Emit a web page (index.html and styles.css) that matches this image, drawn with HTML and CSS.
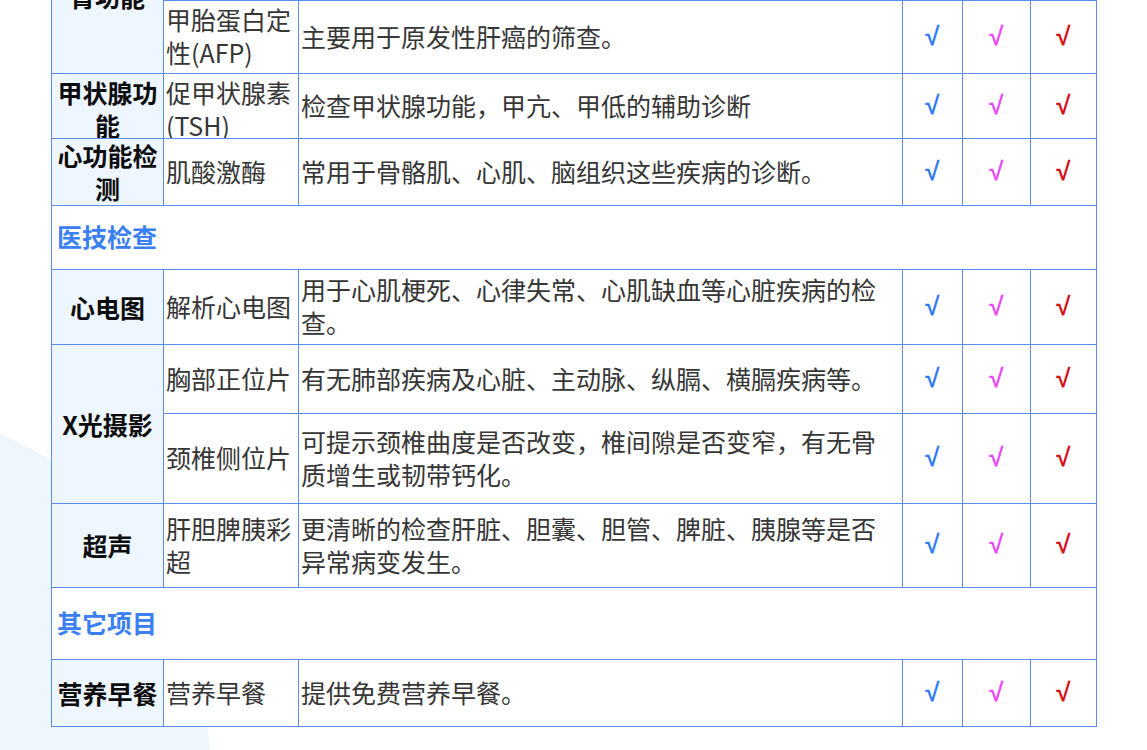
FILE: index.html
```html
<!DOCTYPE html>
<html lang="zh-CN">
<head>
  <meta charset="UTF-8">
  <title>体检项目</title>
  <link rel="stylesheet" href="styles.css">
</head>
<body>
  <div class="bg-shape"></div>
  <div class="page">
    <table class="items">
      <colgroup>
        <col class="c-name">
        <col class="c-item">
        <col class="c-desc">
        <col class="c-pkg">
        <col class="c-pkg2">
        <col class="c-pkg3">
      </colgroup>
      <tr class="h81">
        <td class="name" rowspan="2">肾功能</td>
        <td>肌酐(Cr)</td>
        <td>评估肾脏的滤过功能。</td>
        <td class="ok blue">√</td>
        <td class="ok pink">√</td>
        <td class="ok red">√</td>
      </tr>
      <tr class="h73">
        <td>甲胎蛋白定性(AFP)</td>
        <td>主要用于原发性肝癌的筛查。</td>
        <td class="ok blue">√</td>
        <td class="ok pink">√</td>
        <td class="ok red">√</td>
      </tr>
      <tr class="h65">
        <td class="name cut"><div>甲状腺功能</div></td>
        <td class="cut"><div>促甲状腺素(TSH)</div></td>
        <td>检查甲状腺功能，甲亢、甲低的辅助诊断</td>
        <td class="ok blue">√</td>
        <td class="ok pink">√</td>
        <td class="ok red">√</td>
      </tr>
      <tr class="h67">
        <td class="name">心功能检测</td>
        <td>肌酸激酶</td>
        <td>常用于骨骼肌、心肌、脑组织这些疾病的诊断。</td>
        <td class="ok blue">√</td>
        <td class="ok pink">√</td>
        <td class="ok red">√</td>
      </tr>
      <tr class="h64">
        <td class="section" colspan="6">医技检查</td>
      </tr>
      <tr class="h75">
        <td class="name">心电图</td>
        <td>解析心电图</td>
        <td>用于心肌梗死、心律失常、心肌缺血等心脏疾病的检查。</td>
        <td class="ok blue">√</td>
        <td class="ok pink">√</td>
        <td class="ok red">√</td>
      </tr>
      <tr class="h69">
        <td class="name" rowspan="2">X光摄影</td>
        <td>胸部正位片</td>
        <td>有无肺部疾病及心脏、主动脉、纵膈、横膈疾病等。</td>
        <td class="ok blue">√</td>
        <td class="ok pink">√</td>
        <td class="ok red">√</td>
      </tr>
      <tr class="h90">
        <td>颈椎侧位片</td>
        <td>可提示颈椎曲度是否改变，椎间隙是否变窄，有无骨质增生或韧带钙化。</td>
        <td class="ok blue">√</td>
        <td class="ok pink">√</td>
        <td class="ok red">√</td>
      </tr>
      <tr class="h84">
        <td class="name">超声</td>
        <td>肝胆脾胰彩超</td>
        <td>更清晰的检查肝脏、胆囊、胆管、脾脏、胰腺等是否异常病变发生。</td>
        <td class="ok blue">√</td>
        <td class="ok pink">√</td>
        <td class="ok red">√</td>
      </tr>
      <tr class="h72">
        <td class="section" colspan="6">其它项目</td>
      </tr>
      <tr class="h67">
        <td class="name">营养早餐</td>
        <td>营养早餐</td>
        <td>提供免费营养早餐。</td>
        <td class="ok blue">√</td>
        <td class="ok pink">√</td>
        <td class="ok red">√</td>
      </tr>
    </table>
  </div>
</body>
</html>
```

FILE: styles.css
```css
html, body {
  margin: 0;
  padding: 0;
  background: #fff;
  overflow: hidden;
  height: 750px;
}

body {
  font-family: "Noto Sans CJK SC", "Noto Sans", sans-serif;
  color: #363636;
  position: relative;
}

/* light blue decoration behind the table */
.bg-shape {
  position: absolute;
  left: 0;
  top: 0;
  width: 260px;
  height: 750px;
  background: #eef6fe;
  clip-path: polygon(0 433px, 70px 470px, 205px 700px, 210px 750px, 0 750px);
}

.page {
  position: relative;
  margin-top: -81px;
  padding-left: 51px;
}

.items {
  border-collapse: collapse;
  table-layout: fixed;
  width: 1045px;
  font-size: 25px;
  line-height: 33px;
}

.c-name { width: 112px; }
.c-item { width: 135px; }
.c-desc { width: 604px; }
.c-pkg  { width: 60px; }
.c-pkg2 { width: 68px; }
.c-pkg3 { width: 66px; }

.items td {
  border: 1px solid #5b8def;
  padding: 0 4px 2px 2px;
  background: #fff;
  vertical-align: middle;
  text-align: left;
}

.items td.name {
  background: #eef6ff;
  color: #0d0d0d;
  font-weight: bold;
  text-align: center;
  padding: 0 4px;
}

.items td.cut {
  vertical-align: top;
  padding-top: 2px;
  padding-bottom: 0;
}

.items td.cut div {
  height: 62px;
  overflow: hidden;
}

.items td.section {
  color: #3a80f4;
  font-weight: bold;
  padding-left: 5px;
}

.items td.ok {
  text-align: center;
  padding: 0 0 2px;
  font-family: "Liberation Sans", Arial, sans-serif;
  font-weight: bold;
  font-size: 26px;
}

.blue { color: #2f7cf6; }
.pink { color: #ea4cf5; }
.red  { color: #d40f1a; }

.h64 { height: 64px; }
.h65 { height: 65px; }
.h67 { height: 67px; }
.h69 { height: 69px; }
.h72 { height: 72px; }
.h73 { height: 73px; }
.h75 { height: 75px; }
.h81 { height: 81px; }
.h84 { height: 84px; }
.h90 { height: 90px; }
```
